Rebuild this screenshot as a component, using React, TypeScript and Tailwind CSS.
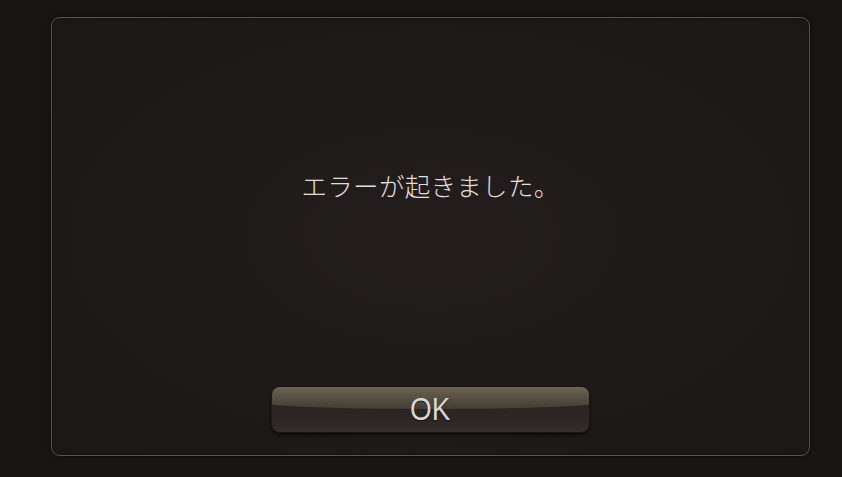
export default function App() {
  return (
    <div className="h-[477px] w-[842px] overflow-hidden bg-[#191512] pl-[51px] pr-[32px] pt-[17px] pb-[21px]">
      <div
        className="flex h-full w-full flex-col items-center rounded-[9px] border border-[#5a564b] bg-[radial-gradient(ellipse_at_center,#231d1d_0%,#1f1a1a_60%,#1b1717_100%)] shadow-[inset_0_0_0_1px_#141110,0_0_4px_rgba(0,0,0,0.7)]"
        style={{ fontFamily: '"Noto Sans CJK JP", "Noto Sans", sans-serif' }}
      >
        <p className="mt-[150px] text-[25.5px] font-light leading-[34px] tracking-[0.3px] text-[#e2dfdb]">
          エラーが起きました。
        </p>
        <div className="flex-1" />
        <button className="relative mb-[22px] h-[47px] w-[319px] overflow-hidden rounded-[9px] border border-[#1b1716] bg-[linear-gradient(to_bottom,#2a2422_50%,#2e2926_85%,#35302c_100%)] shadow-[0_2px_3px_rgba(0,0,0,0.6)]">
          <span className="absolute -inset-x-[20px] -top-[6px] h-[28px] rounded-b-[50%_8px] bg-[linear-gradient(to_bottom,#77705f_0%,#615a4b_40%,#433c33_100%)]" />
          <span
            className="relative inline-block scale-x-[0.87] text-[32px] leading-[45px] text-[#d6d6d4] [text-shadow:0_1px_1px_rgba(0,0,0,0.6)]"
            style={{ fontFamily: '"Liberation Sans", Arial, sans-serif' }}
          >
            OK
          </span>
        </button>
      </div>
    </div>
  );
}
